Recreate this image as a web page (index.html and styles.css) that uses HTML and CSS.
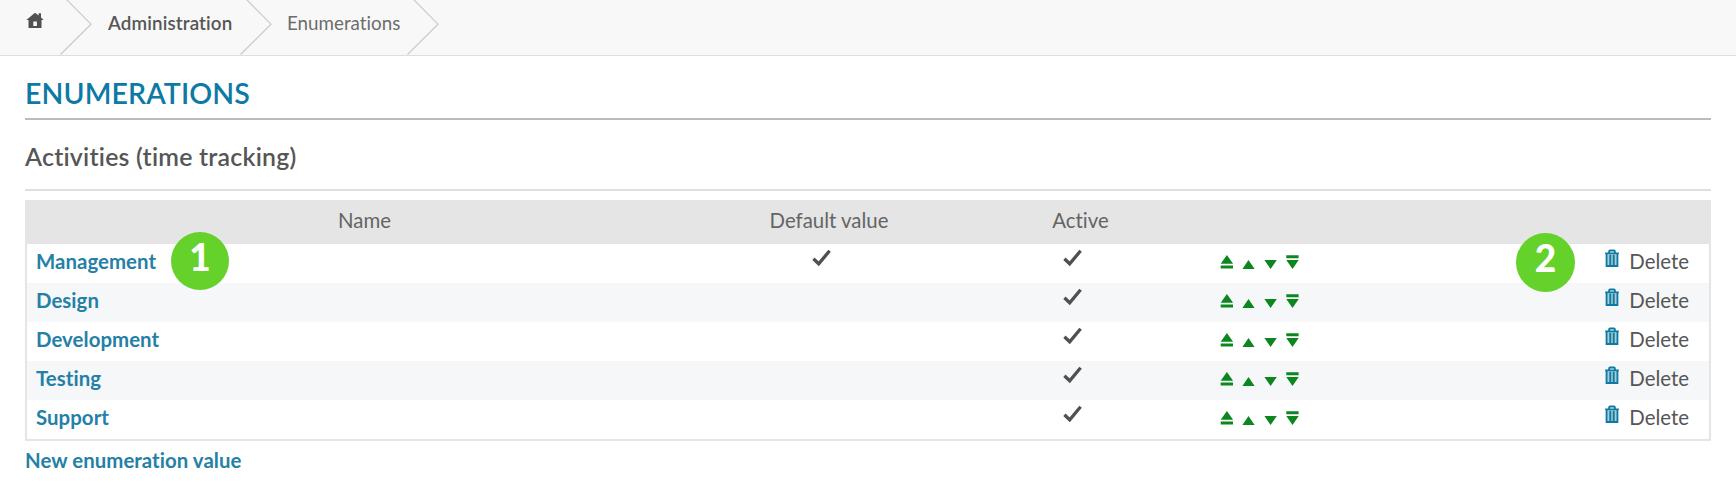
FILE: index.html
```html
<!DOCTYPE html>
<html lang="en">
<head>
<meta charset="utf-8">
<title>Enumerations</title>
<link rel="stylesheet" href="styles.css">
</head>
<body>
<svg class="sprite" aria-hidden="true">
  <symbol id="check" viewBox="0 0 20 18"><path d="M1.4 9.8 6.7 14.8 17.6 1.8" fill="none" stroke="#505050" stroke-width="3.3"/></symbol>
  <symbol id="trash" viewBox="0 0 16 20"><path d="M3 5.5h10V18H3z" fill="#a9cdd3"/><path d="M5 4V2.6q0-1 1-1h4q1 0 1 1V4M.8 4.6h14.4M2.3 5v12.9h11.4V5M6.2 6v11M9.8 6v11" fill="none" stroke="#0c7aa5" stroke-width="2"/></symbol>
  <symbol id="sort" viewBox="0 0 80 16"><path d="M.7 9.8 6.9.9l6.2 8.9zM.7 11.6h12.3v3H.7zM22.4 15l6.1-8.9 6.1 8.9zM44.4 6h12.4l-6.2 8.9zM66.3 1.3h12.3v3H66.3zM66.3 6h12.4l-6.2 8.9z" fill="#0c861f"/></symbol>
</svg>
<nav class="breadcrumb">
  <a class="crumb home"><svg width="18" height="17" viewBox="0 0 18 17"><path fill-rule="evenodd" d="M9 .8.3 8h2.2v8h13V8h2.2L15 5.5V1.2h-2.4v2.3zM7.3 9.5h3.6V14H7.3z" fill="#505050"/></svg></a>
  <svg class="arrow" width="33" height="55" viewBox="0 0 33 55"><path d="M6.5-.5 31 24.2.5 54.5"/></svg>
  <a class="crumb admin">Administration</a>
  <svg class="arrow" width="33" height="55" viewBox="0 0 33 55"><path d="M6.5-.5 31 24.2.5 54.5"/></svg>
  <a class="crumb current">Enumerations</a>
  <svg class="arrow" width="33" height="55" viewBox="0 0 33 55"><path d="M6.5-.5 31 24.2.5 54.5"/></svg>
</nav>
<main>
  <h2>ENUMERATIONS</h2>
  <h3><span>Activities (time tracking)</span></h3>
  <div class="table">
    <div class="row head"><div>Name</div><div>Default value</div><div>Active</div><div></div><div></div></div>
    <div class="row"><a class="name">Management</a><div><svg class="check"><use href="#check"/></svg></div><div><svg class="check"><use href="#check"/></svg></div><svg class="sort"><use href="#sort"/></svg><a class="delete"><svg><use href="#trash"/></svg>Delete</a>
      <span class="badge one">1</span><span class="badge two">2</span></div>
    <div class="row"><a class="name">Design</a><div></div><div><svg class="check"><use href="#check"/></svg></div><svg class="sort"><use href="#sort"/></svg><a class="delete"><svg><use href="#trash"/></svg>Delete</a></div>
    <div class="row"><a class="name">Development</a><div></div><div><svg class="check"><use href="#check"/></svg></div><svg class="sort"><use href="#sort"/></svg><a class="delete"><svg><use href="#trash"/></svg>Delete</a></div>
    <div class="row"><a class="name">Testing</a><div></div><div><svg class="check"><use href="#check"/></svg></div><svg class="sort"><use href="#sort"/></svg><a class="delete"><svg><use href="#trash"/></svg>Delete</a></div>
    <div class="row"><a class="name">Support</a><div></div><div><svg class="check"><use href="#check"/></svg></div><svg class="sort"><use href="#sort"/></svg><a class="delete"><svg><use href="#trash"/></svg>Delete</a></div>
  </div>
  <a class="new">New enumeration value</a>
</main>
</body>
</html>
```
FILE: styles.css
```css
* { box-sizing: border-box; }
body { margin: 0; background: #fff; color: #565656; font: 20.4px/24px Lato, "Liberation Sans", sans-serif; font-variant-ligatures: none; }
.sprite { position: absolute; width: 0; height: 0; }
.breadcrumb { display: flex; height: 56px; background: #f8f8f8; border-bottom: 1px solid #dedede; }
.arrow { display: block; flex: none; }
.arrow path { fill: none; stroke: #c9c9c9; stroke-width: 1.2; }
.crumb { font-size: 18.8px; line-height: 24px; padding-top: 11px; white-space: nowrap; }
.home { width: 60px; padding-left: 26px; padding-top: 12px; }
.home svg { display: block; }
.admin { width: 147px; padding-left: 15px; font-weight: 600; letter-spacing: .12px; }
.current { width: 134px; padding-left: 14px; color: #6c6c6c; }
main { padding: 0 25px; }
h2 { margin: 0; height: 64px; padding-top: 20px; font-size: 28.5px; line-height: 34px; font-weight: 600; letter-spacing: .1px; color: #0c7aa5; border-bottom: 2px solid #bcbcbc; }
h3 { margin: 0; height: 71px; padding-top: 21px; font-size: 24.9px; line-height: 30px; font-weight: 600; letter-spacing: .22px; border-bottom: 2px solid #dfdfdf; }
.table { margin-top: 9px; border: 2px solid #e5e5e5; border-top: 0; }
.row { position: relative; display: grid; grid-template-columns: 675px 239px 264px 304px 1fr; height: 39px; text-align: center; }
.row:nth-child(odd) { background: #f5f7f9; }
.row.head { height: 44px; padding-top: 8px; background: #e5e5e5; color: #646464; }
.head div:nth-child(2), .head div:nth-child(3) { padding-left: 15px; }
.name { padding: 5px 0 0 9px; text-align: left; font-weight: 700; letter-spacing: .05px; color: #2480a6; }
.check { width: 20px; height: 18px; margin-top: 5px; }
.sort { width: 80px; height: 16px; margin: 10px 0 0 15px; }
.delete { display: flex; justify-content: flex-end; padding: 5px 20px 0 0; }
.delete svg { width: 16px; height: 19px; margin: 0 9px 0 0; }
.badge { position: absolute; z-index: 1; top: -12px; width: 58px; height: 58px; border-radius: 50%; background: #64d22b; color: #fff; font-size: 37px; line-height: 50px; font-weight: 900; }
.one { left: 144px; }
.two { left: 1489px; top: -11px; width: 59px; height: 59px; }
.new { display: block; padding-top: 7px; font-weight: 700; letter-spacing: .05px; color: #2480a6; }
```
